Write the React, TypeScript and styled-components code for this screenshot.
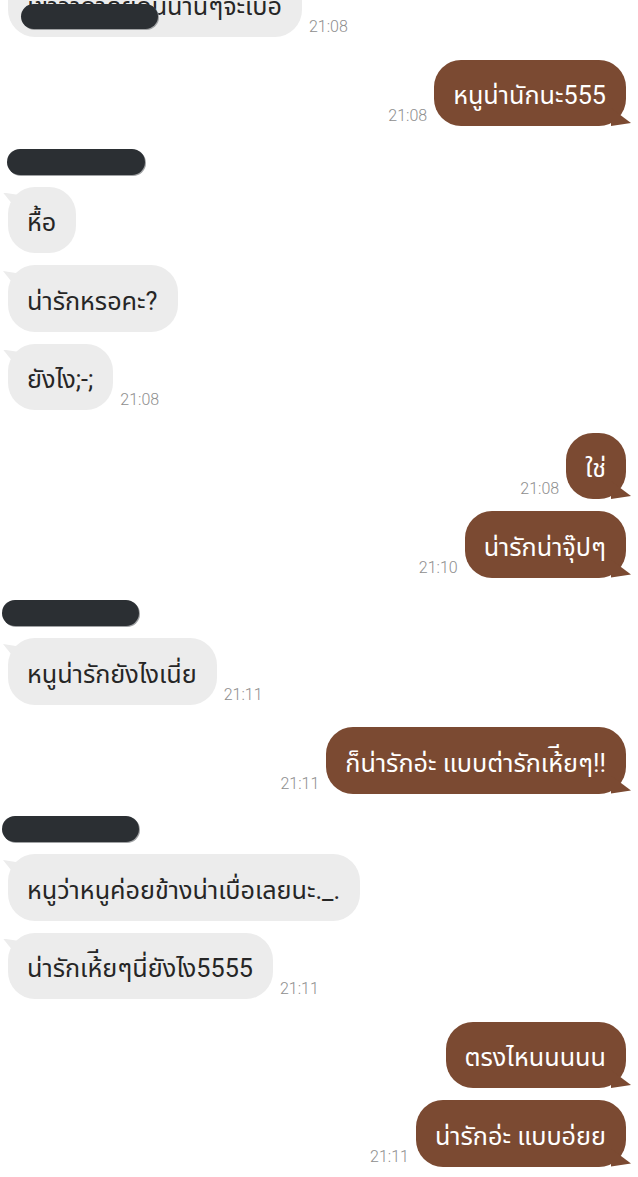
import React from "react";
import styled, { createGlobalStyle } from "styled-components";

const Global = createGlobalStyle`
  html, body { margin: 0; padding: 0; background: #ffffff; }
  body { font-family: Roboto, "Noto Sans", "Noto Sans Thai", "DejaVu Sans", sans-serif; overflow: hidden; }
`;

const Screen = styled.div`
  width: 638px;
  height: 1177px;
  overflow: hidden;
  background: #ffffff;
`;

const Thread = styled.div`
  display: flex;
  flex-direction: column;
  padding: 0 12px 0 8px;
  margin-top: -29.5px;
`;

const Group = styled.div<{ $side: "left" | "right" }>`
  display: flex;
  flex-direction: column;
  align-items: ${(p) => (p.$side === "left" ? "flex-start" : "flex-end")};
  gap: 12px;
  margin-bottom: 22.5px;
`;

const Name = styled.div<{ $w: number; $x: number }>`
  width: ${(p) => p.$w}px;
  height: 26px;
  border-radius: 13px;
  background: #2b2f33;
  margin-left: ${(p) => p.$x}px;
  box-shadow: 1px 1px 0 #a0a2a4;
`;

const Row = styled.div<{ $side: "left" | "right" }>`
  display: flex;
  flex-direction: ${(p) => (p.$side === "left" ? "row" : "row-reverse")};
  align-items: flex-end;
  gap: 7px;
`;

const Bubble = styled.div<{ $side: "left" | "right"; $tail?: boolean }>`
  position: relative;
  height: 66.5px;
  box-sizing: border-box;
  padding: 0 20px 0 19px;
  display: flex;
  align-items: center;
  border-radius: 27px;
  font-size: 25.2px;
  line-height: 1;
  white-space: nowrap;
  background: ${(p) => (p.$side === "left" ? "#ececec" : "#7b4a32")};
  color: ${(p) => (p.$side === "left" ? "#262626" : "#ffffff")};
  &::after {
    content: "";
    display: ${(p) => (p.$tail === false ? "none" : "block")};
    position: absolute;
    background: inherit;
    ${(p) =>
      p.$side === "left"
        ? `width: 16px; height: 16px; left: -5px; top: 6px; clip-path: polygon(0 0, 100% 15%, 80% 100%);`
        : `width: 20px; height: 18px; right: -5px; bottom: 0px; clip-path: polygon(0 0, 100% 83%, 0 100%);`}
  }
`;

const BubbleText = styled.span`
  position: relative;
  top: 3px;
`;

const Time = styled.span`
  font-family: Roboto, "Liberation Sans", sans-serif;
  font-weight: 300;
  font-size: 16px;
  color: #8e8e8e;
  margin-bottom: 1px;
`;

const Redact = styled.div`
  position: absolute;
  left: 13px;
  top: 33.5px;
  width: 137px;
  height: 25px;
  border-radius: 13px;
  background: #2b2f33;
  box-shadow: 1px 1px 0 #a0a2a4;
`;

type Msg = { text: string; time?: string };
type Block = {
  side: "left" | "right";
  name?: { w: number; x: number };
  msgs: Msg[];
  first?: boolean;
};

const blocks: Block[] = [
  { side: "left", first: true, msgs: [{ text: "เขาว่าถ้าคุยกันนานๆจะเบื่อ", time: "21:08" }] },
  { side: "right", msgs: [{ text: "หนูน่านักนะ555", time: "21:08" }] },
  {
    side: "left",
    name: { w: 138, x: -1 },
    msgs: [{ text: "หื้อ" }, { text: "น่ารักหรอคะ?" }, { text: "ยังไง;-;", time: "21:08" }],
  },
  { side: "right", msgs: [{ text: "ใช่", time: "21:08" }, { text: "น่ารักน่าจุ๊ปๆ", time: "21:10" }] },
  { side: "left", name: { w: 137, x: -6 }, msgs: [{ text: "หนูน่ารักยังไงเนี่ย", time: "21:11" }] },
  { side: "right", msgs: [{ text: "ก็น่ารักอ่ะ แบบต่ารักเห้ียๆ!!", time: "21:11" }] },
  {
    side: "left",
    name: { w: 137, x: -6 },
    msgs: [{ text: "หนูว่าหนูค่อยข้างน่าเบื่อเลยนะ._." }, { text: "น่ารักเห้ียๆนี่ยังไง5555", time: "21:11" }],
  },
  { side: "right", msgs: [{ text: "ตรงไหนนนนน" }, { text: "น่ารักอ่ะ แบบอ่ยย", time: "21:11" }] },
];

export default function App() {
  return (
    <Screen>
      <Global />
      <Thread>
        {blocks.map((b, i) => (
          <Group key={i} $side={b.side}>
            {b.name && <Name $w={b.name.w} $x={b.name.x} />}
            {b.msgs.map((m, j) => (
              <Row key={j} $side={b.side}>
                <Bubble $side={b.side} $tail={!b.first}>
                  <BubbleText>{m.text}</BubbleText>
                  {b.first && <Redact />}
                </Bubble>
                {m.time && <Time>{m.time}</Time>}
              </Row>
            ))}
          </Group>
        ))}
      </Thread>
    </Screen>
  );
}
